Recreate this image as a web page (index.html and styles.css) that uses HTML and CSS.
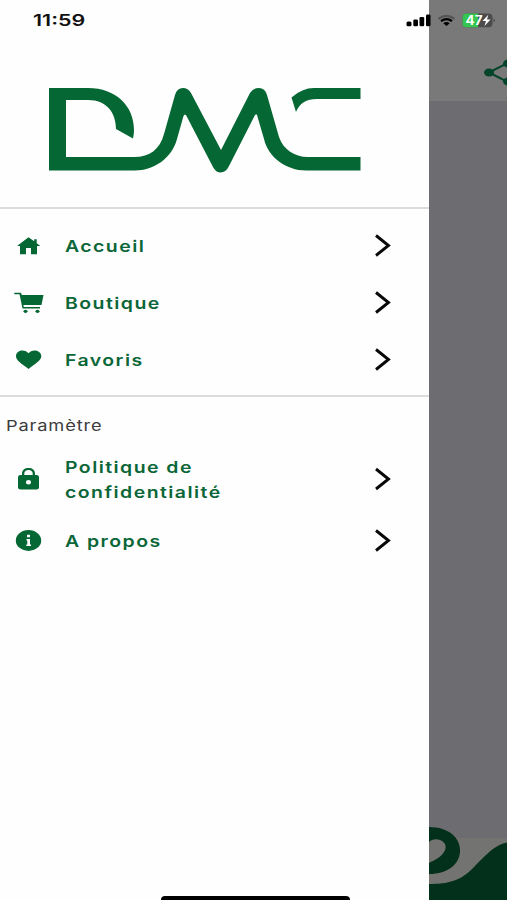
FILE: index.html
```html
<!DOCTYPE html>
<html lang="fr">
<head>
<meta charset="utf-8">
<title>DMC</title>
<link rel="stylesheet" href="styles.css">
</head>
<body>
<div class="screen">
  <aside class="drawer">
    <header class="brand">
      <svg class="logo" width="312" height="86" viewBox="49 87 312 86" role="img" aria-label="DMC">
        <path d="M49 88H88C116 88 134 106 134 130Q134 134 133 138.500L116 129C116 113 107 100 88 100H66V157H134C150 157 160 149 164 134L175 95Q177 88 183 88Q188 88 191 93L221 150L250 93Q253 88 259 88Q265 88 267 95L279 137C283 149 294 157 308 157H360.500V170.500H306C286 170.500 268 157 264 139L257 115Q256 113 254.500 116L229 166Q226 172.500 220.500 172.500Q216 172.500 213 167L186.500 116Q185 113 183.500 116L177 139C172 158 154 170.500 135 170.500H49Z"/>
        <path d="M291.500 97.500Q302 88 314 88H360.500V99H317Q301 99 296 112Z"/>
      </svg>
    </header>
    <nav class="menu">
      <a class="item">
        <svg class="icon" width="30" height="24" viewBox="0 0 30 24"><path d="M14.500 3.300L3 12H6V20.300H12V14H17V20.300H23V12H26.300L22.700 9.200V5.200H20.200V7.300Z"/></svg>
        <span class="label"><span class="wide">Accueil</span></span>
        <svg class="chevron" width="18" height="24" viewBox="0 0 18 24"><path d="M2 1.500L14.500 11.500L2 21.500"/></svg>
      </a>
      <a class="item">
        <svg class="icon" width="30" height="24" viewBox="0 0 30 24"><path d="M.3 1.700H7L7.800 4H29.500L27.500 14H9.300L9.800 16H26V17.500H8.500L5.500 3.200H.3Z"/><ellipse cx="11.500" cy="20.300" rx="2" ry="1.600"/><ellipse cx="23.500" cy="20.300" rx="2" ry="1.600"/></svg>
        <span class="label"><span class="wide">Boutique</span></span>
        <svg class="chevron" width="18" height="24" viewBox="0 0 18 24"><path d="M2 1.500L14.500 11.500L2 21.500"/></svg>
      </a>
      <a class="item">
        <svg class="icon" width="30" height="24" viewBox="0 0 30 24"><path d="M14.500 21L12 19C5 14 2 11.500 2 8C2 5 4.500 2.500 8.300 2.500C11 2.500 13.200 3.700 14.500 5.300C15.800 3.700 18 2.500 20.700 2.500C24.500 2.500 27.300 5 27.300 8C27.300 11.500 24 14 17 19Z"/></svg>
        <span class="label"><span class="wide">Favoris</span></span>
        <svg class="chevron" width="18" height="24" viewBox="0 0 18 24"><path d="M2 1.500L14.500 11.500L2 21.500"/></svg>
      </a>
    </nav>
    <section class="settings">
      <h2 class="heading"><span class="wide">Paramètre</span></h2>
      <a class="item tall">
        <svg class="icon" width="30" height="24" viewBox="0 0 30 24"><path fill-rule="evenodd" d="M6.500 8H8V6.500C8 3 10.700 1 14.500 1S21 3 21 6.500V8H22.500Q25 8 25 10V20.500Q25 22.500 22.500 22.500H6.500Q4 22.500 4 20.500V10Q4 8 6.500 8ZM10.300 8H18.700V6.500C18.700 4.300 17 3 14.500 3S10.300 4.300 10.300 6.500ZM14.500 13A2.600 2.200 0 1 0 14.500 17.400A2.600 2.200 0 1 0 14.500 13Z"/></svg>
        <span class="label"><span class="wide">Politique de<br>confidentialité</span></span>
        <svg class="chevron" width="18" height="24" viewBox="0 0 18 24"><path d="M2 2L14.500 12L2 22"/></svg>
      </a>
      <a class="item">
        <svg class="icon" width="30" height="24" viewBox="0 0 30 24"><ellipse cx="14.500" cy="11.500" rx="12.700" ry="10.400"/><path class="cut" d="M13 5.800H16V8.300H13ZM12.500 10H16V15.500H17V17H12.300V15.500H13.300V11.500H12.500Z"/></svg>
        <span class="label"><span class="wide">A propos</span></span>
        <svg class="chevron" width="18" height="24" viewBox="0 0 18 24"><path d="M2 1.500L14.500 11.500L2 21.500"/></svg>
      </a>
    </section>
  </aside>
  <main class="page">
    <div class="topbar">
      <svg width="24" height="34" viewBox="0 0 24 34"><path class="link" d="M6 16.500L24 7.500M6 16.500L24 25.500"/><ellipse cx="6" cy="16.500" rx="5" ry="4"/><ellipse cx="25" cy="7.500" rx="5" ry="4"/><ellipse cx="25" cy="25.500" rx="5" ry="4"/></svg>
    </div>
    <div class="content"></div>
    <svg class="tabbar" width="78" height="74" viewBox="429 826 78 74">
      <path class="bar" d="M429 838H507V900H429Z"/>
      <path class="wave" d="M429 884C448 884 461 881 474 867C486 855 494 845 507 842.500V900H429Z"/>
      <path class="wave" d="M429 827C449 827 460 838 460 850.500C460 864 448 874 429 874Z"/>
      <path class="bar" d="M429 842C432 839 436 838.500 440 840C446 842 447 848 444 852C441 857 435 860 429 863Z"/>
    </svg>
  </main>
  <div class="status">
    <span class="clock"><span class="wide">11:59</span></span>
    <svg class="signals" width="90" height="20" viewBox="405 10 90 20">
      <rect x="406.500" y="21.500" width="5" height="4.800" rx="1.500"/><rect x="413.300" y="19.500" width="4.700" height="6.800" rx="1.300"/><rect x="419.500" y="17" width="4.700" height="9.300" rx="1.300"/><rect x="426" y="14.500" width="4.500" height="11.800" rx="1.300"/>
      <path class="arc faint" d="M438.500 18.800Q446.500 12.800 454.500 18.800"/><path class="arc" d="M441 21.200Q446.500 17 452 21.200"/><path d="M443.300 23.200Q446.500 20.900 449.700 23.200L446.500 26Z"/>
      <rect class="battery" x="462.500" y="13.500" width="30" height="13.800" rx="4"/><path class="charge" d="M478 13.500H466.500Q462.500 13.500 462.500 17.500V23.300Q462.500 27.300 466.500 27.300H478Z"/><path class="battery" d="M493.700 18Q496 20.400 493.700 22.800Z"/>
      <text x="465.500" y="24.900" textLength="17" lengthAdjust="spacingAndGlyphs">47</text><path class="cut" d="M488.300 14.800L482.500 21H486L484.500 26L490.500 19.500H487Z"/>
    </svg>
  </div>
  <div class="home"></div>
</div>
</body>
</html>
```
FILE: styles.css
```css
* { box-sizing: border-box; }
body { margin: 0; background: #fff; font-family: Inter, "Liberation Sans", sans-serif; }
.screen { position: relative; display: flex; width: 507px; height: 900px; overflow: hidden; }
.drawer { width: 429px; background: #fefefe; }
.brand { height: 209px; padding: 87px 0 0 49px; border-bottom: 2px solid #dcdcdc; }
.logo { display: block; fill: #056733; }
.menu { height: 188px; padding-top: 8px; border-bottom: 2px solid #dcdcdc; }
.item { display: flex; align-items: center; height: 57px; padding: 0 37px 0 14px; color: #0b6638; }
.icon { flex: none; fill: #056733; }
.icon .cut { fill: #fff; }
.label { flex: 1; padding: 1px 0 0 20.700px; font-size: 16px; font-weight: 600; line-height: 24.500px; letter-spacing: 1.200px; white-space: nowrap; }
.wide { display: inline-block; transform: scaleX(1.215); transform-origin: left center; }
.chevron { fill: none; stroke: #080808; stroke-width: 2.900; }
.heading { margin: 0; padding: 17px 0 0 5.500px; font-size: 15px; font-weight: 400; line-height: 24px; letter-spacing: .7px; color: #3c3c3c; }
.tall { height: 66px; margin-top: 8px; }
.page { display: flex; flex-direction: column; width: 78px; background: #6d6c71; }
.topbar { display: flex; justify-content: flex-end; height: 101px; padding-top: 56px; background: #797979; }
.topbar svg { fill: #04452a; }
.topbar .link { fill: none; stroke: #04452a; stroke-width: 2; }
.content { flex: 1; }
.tabbar { display: block; }
.bar { fill: #737371; }
.wave { fill: #03301a; }
.status { position: absolute; inset: 0 0 auto; display: flex; justify-content: space-between; padding: 10px 12px 0 32.500px; }
.clock { font-size: 16px; font-weight: 600; line-height: 21px; color: #111; }
.clock .wide { transform: scaleX(1.340); }
.signals .arc { fill: none; stroke: #000; stroke-width: 2.200; }
.signals .faint { stroke: #555; }
.signals .battery { fill: #4b4b4b; }
.signals .charge { fill: #34c651; }
.signals .cut, .signals text { fill: #fff; }
.signals text { font-size: 12.500px; font-weight: 700; }
.home { position: absolute; left: 161px; bottom: 0; width: 189px; height: 4px; border-radius: 4px 4px 0 0; background: #000; }
```
